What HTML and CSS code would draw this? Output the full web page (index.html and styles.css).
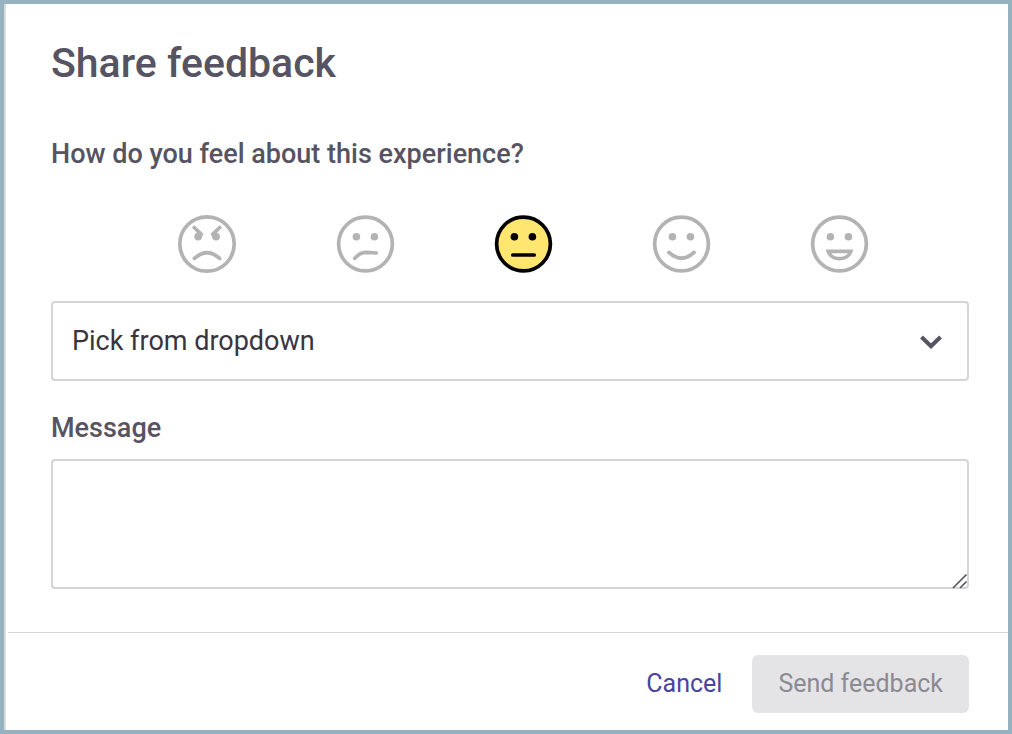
FILE: index.html
```html
<!DOCTYPE html>
<html lang="en">
<head>
<meta charset="utf-8">
<meta name="viewport" content="width=device-width, initial-scale=1">
<title>Share feedback</title>
<link rel="stylesheet" href="styles.css">
</head>
<body>
<form class="dialog">
  <div class="dialog-body">
    <h1 class="title">Share feedback</h1>
    <fieldset class="rating">
      <legend class="label">How do you feel about this experience?</legend>
      <div class="faces">
        <label class="face">
          <input class="face-input" type="radio" name="mood" value="1" aria-label="Angry">
          <svg class="face-icon" viewBox="0 0 60 60" aria-hidden="true">
            <circle class="head" cx="30" cy="30" r="27.2"/>
            <circle class="eye" cx="21.2" cy="22.6" r="3.9"/><circle class="eye" cx="39" cy="22.6" r="3.9"/>
            <path class="line" d="M17.2 13.5 24.4 20.3M42.8 13.5 35.6 20.3M17.4 44.4Q30 33 42.6 44.4"/>
          </svg>
        </label>
        <label class="face">
          <input class="face-input" type="radio" name="mood" value="2" aria-label="Unhappy">
          <svg class="face-icon" viewBox="0 0 60 60" aria-hidden="true">
            <circle class="head" cx="30.5" cy="30" r="26.9"/>
            <circle class="eye" cx="21.4" cy="22.7" r="3.8"/><circle class="eye" cx="39.4" cy="22.7" r="3.8"/>
            <path class="line" d="M19.7 44.4C24 39.4 27 38.4 32 38.4L41.3 39"/>
          </svg>
        </label>
        <label class="face">
          <input class="face-input" type="radio" name="mood" value="3" aria-label="Neutral" checked>
          <svg class="face-icon" viewBox="0 0 60 60" aria-hidden="true">
            <circle class="head" cx="30.5" cy="30" r="26.9"/>
            <circle class="eye" cx="21.4" cy="22.7" r="3.8"/><circle class="eye" cx="39.4" cy="22.7" r="3.8"/>
            <path class="line" d="M19.8 41H41.2"/>
          </svg>
        </label>
        <label class="face">
          <input class="face-input" type="radio" name="mood" value="4" aria-label="Happy">
          <svg class="face-icon" viewBox="0 0 60 60" aria-hidden="true">
            <circle class="head" cx="30.5" cy="30" r="26.9"/>
            <circle class="eye" cx="21.4" cy="22.7" r="3.8"/><circle class="eye" cx="39.4" cy="22.7" r="3.8"/>
            <path class="line" d="M17.9 38.4Q30.5 50 43.1 38.4"/>
          </svg>
        </label>
        <label class="face">
          <input class="face-input" type="radio" name="mood" value="5" aria-label="Delighted">
          <svg class="face-icon" viewBox="0 0 60 60" aria-hidden="true">
            <circle class="head" cx="30.5" cy="30" r="26.9"/>
            <circle class="eye" cx="21.4" cy="22.7" r="3.8"/><circle class="eye" cx="39.4" cy="22.7" r="3.8"/>
            <path class="grin" d="M16.8 35.6H44.2C43 42.4 37.4 46.4 30.5 46.4S18 42.4 16.8 35.6ZM22.2 39.2C24 41.8 27 42.8 30.5 42.8S37 41.8 38.8 39.2Z"/>
          </svg>
        </label>
      </div>
    </fieldset>
    <div class="select-wrap">
      <select class="select" aria-label="Topic">
        <option>Pick from dropdown</option>
      </select>
      <svg class="chevron" viewBox="0 0 24 16" aria-hidden="true"><path d="M2.5 3 12 12.2 21.5 3"/></svg>
    </div>
    <label class="label message-label" for="message">Message</label>
    <div class="message-wrap">
      <textarea class="message" id="message"></textarea>
      <svg class="grip" viewBox="0 0 16 16" aria-hidden="true"><path d="M1 15 14.5 1.5M8 15 14.5 8.5"/></svg>
    </div>
  </div>
  <footer class="footer">
    <button class="button cancel" type="button">Cancel</button>
    <button class="button send" type="submit" disabled>Send feedback</button>
  </footer>
</form>
</body>
</html>
```
FILE: styles.css
```css
* {
  box-sizing: border-box;
}

body {
  margin: 0;
  font-family: Roboto, "Liberation Sans", sans-serif;
  font-size: 27px;
  line-height: 32px;
  color: #565362;
  background: #fff;
}

.dialog {
  display: flex;
  flex-direction: column;
  min-height: 100vh;
  border: 4px solid #94b2bf;
  background: linear-gradient(#dcdcde, #dcdcde) left / 2px 100% no-repeat #fff;
}

.dialog-body {
  flex: 1;
  padding: 35px 39px 43px 47px;
}

.title {
  margin: 0 0 51px;
  font-size: 41px;
  font-weight: 500;
  line-height: 48px;
}

.rating {
  min-width: 0;
  margin: 0;
  padding: 0;
  border: 0;
}

.label {
  display: block;
  padding: 0;
  font-weight: 500;
}

.faces {
  display: grid;
  grid-template-columns: repeat(5, 1fr);
  padding: 44px 51px 27px 77px;
}

.face {
  position: relative;
  display: flex;
  justify-content: center;
  cursor: pointer;
}

.face-input {
  position: absolute;
  width: 60px;
  height: 60px;
  margin: 0;
  opacity: 0;
}

.face-icon {
  width: 60px;
  height: 60px;
  color: #b3b3b3;
}

.head {
  fill: none;
  stroke: currentColor;
  stroke-width: 3.7;
}

.eye,
.grin {
  fill: currentColor;
  fill-rule: evenodd;
}

.line {
  fill: none;
  stroke: currentColor;
  stroke-width: 3.7;
  stroke-linecap: round;
}

.face-input:checked + .face-icon {
  color: #000;
}

.face-input:checked + .face-icon .head {
  fill: #ffe671;
}

.select-wrap,
.message-wrap {
  position: relative;
  display: flex;
}

.select,
.message {
  width: 100%;
  border: 2px solid #d5d4db;
  border-radius: 4px;
  background: #fff;
  font: inherit;
  color: #38353f;
}

.select {
  height: 80px;
  padding: 0 64px 0 19px;
  appearance: none;
}

.chevron {
  position: absolute;
  top: 33px;
  right: 26px;
  width: 24px;
  height: 16px;
  fill: none;
  stroke: #565362;
  stroke-width: 4;
  pointer-events: none;
}

.message-label {
  margin: 31px 0 15px;
}

.message {
  height: 130px;
  padding: 12px 20px;
  resize: none;
}

.grip {
  position: absolute;
  right: 1px;
  bottom: 0;
  width: 16px;
  height: 16px;
  fill: none;
  stroke: #56535a;
  stroke-width: 1.6;
  pointer-events: none;
}

.footer {
  display: flex;
  justify-content: flex-end;
  align-items: center;
  gap: 4px;
  margin-left: 4px;
  padding: 22px 39px 17px;
  border-top: 1px solid #d5d4db;
}

.button {
  height: 58px;
  padding: 0 26px;
  border: 0;
  border-radius: 6px;
  background: none;
  font: inherit;
  font-size: 25px;
}

.cancel {
  color: #4a43a0;
}

.send {
  background: #e4e4e6;
  color: #8b8a92;
}
```
